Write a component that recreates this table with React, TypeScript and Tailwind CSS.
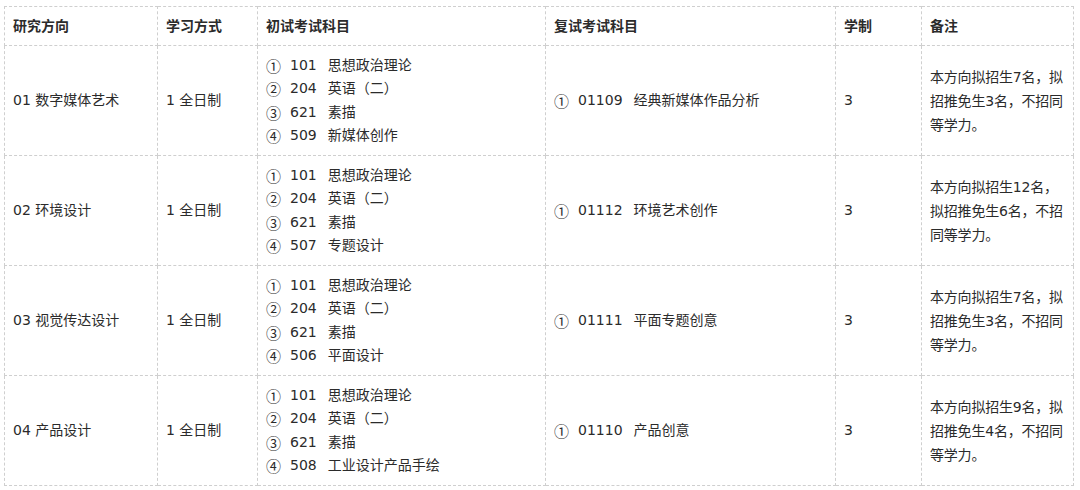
const rows = [
  {
    dir: '01 数字媒体艺术',
    subjects: [
      ['①', '101', '思想政治理论'],
      ['②', '204', '英语（二）'],
      ['③', '621', '素描'],
      ['④', '509', '新媒体创作'],
    ],
    retest: ['①', '01109', '经典新媒体作品分析'],
    note: ['本方向拟招生7名，拟', '招推免生3名，不招同', '等学力。'],
  },
  {
    dir: '02 环境设计',
    subjects: [
      ['①', '101', '思想政治理论'],
      ['②', '204', '英语（二）'],
      ['③', '621', '素描'],
      ['④', '507', '专题设计'],
    ],
    retest: ['①', '01112', '环境艺术创作'],
    note: ['本方向拟招生12名，', '拟招推免生6名，不招', '同等学力。'],
  },
  {
    dir: '03 视觉传达设计',
    subjects: [
      ['①', '101', '思想政治理论'],
      ['②', '204', '英语（二）'],
      ['③', '621', '素描'],
      ['④', '506', '平面设计'],
    ],
    retest: ['①', '01111', '平面专题创意'],
    note: ['本方向拟招生7名，拟', '招推免生3名，不招同', '等学力。'],
  },
  {
    dir: '04 产品设计',
    subjects: [
      ['①', '101', '思想政治理论'],
      ['②', '204', '英语（二）'],
      ['③', '621', '素描'],
      ['④', '508', '工业设计产品手绘'],
    ],
    retest: ['①', '01110', '产品创意'],
    note: ['本方向拟招生9名，拟', '招推免生4名，不招同', '等学力。'],
  },
];

const headers = ['研究方向', '学习方式', '初试考试科目', '复试考试科目', '学制', '备注'];
const widths = ['w-[153px]', 'w-[100px]', 'w-[288px]', 'w-[290px]', 'w-[86px]', 'w-[152px]'];

const cell = 'border border-dashed border-[#cfcfcf] px-2 align-middle';

const Item = ({ parts }: { parts: string[] }) => (
  <div className="flex items-center whitespace-nowrap">
    <span className="w-[14px] font-['Noto_Sans_CJK_SC',sans-serif] text-[15px] leading-none">{parts[0]}</span>
    <span className="ml-[10px]">{parts[1]}</span>
    <span className="ml-[11px]">{parts[2]}</span>
  </div>
);

export default function App() {
  return (
    <div className="min-h-[490px] w-[1080px] bg-white pl-1 pt-[6px] font-['DejaVu_Sans','Noto_Sans_CJK_SC',sans-serif] text-[14px] text-[#2b2b2b]">
      <table className="table-fixed border-collapse border border-dashed border-[#cfcfcf]">
        <thead>
          <tr className="h-[39px]">
            {headers.map((h, i) => (
              <th key={h} className={`${cell} ${widths[i]} text-left font-bold`}>
                {h}
              </th>
            ))}
          </tr>
        </thead>
        <tbody>
          {rows.map((r) => (
            <tr key={r.dir} className="h-[110px]">
              <td className={cell}>{r.dir}</td>
              <td className={cell}>1 全日制</td>
              <td className={`${cell} leading-[23.5px]`}>
                {r.subjects.map((s) => (
                  <Item key={s[0]} parts={s} />
                ))}
              </td>
              <td className={cell}>
                <Item parts={r.retest} />
              </td>
              <td className={cell}>3</td>
              <td className={`${cell} leading-[24px]`}>
                {r.note.map((n) => (
                  <div key={n} className="whitespace-nowrap tracking-[-0.2px]">{n}</div>
                ))}
              </td>
            </tr>
          ))}
        </tbody>
      </table>
    </div>
  );
}
